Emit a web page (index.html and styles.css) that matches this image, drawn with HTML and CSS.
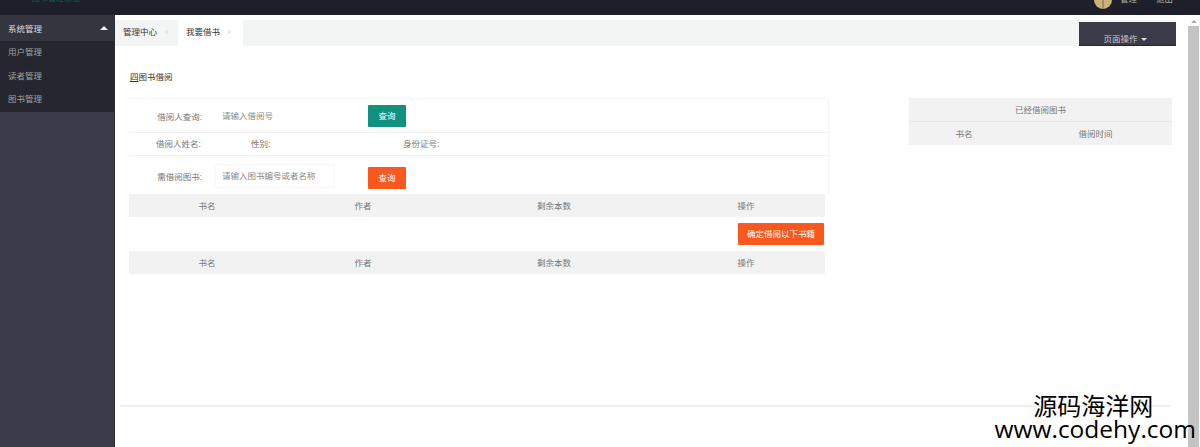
FILE: index.html
```html
<!DOCTYPE html>
<html lang="zh">
<head>
<meta charset="utf-8">
<title>图书借阅</title>
<link rel="stylesheet" href="styles.css">
</head>
<body>
<header class="topbar">
  <div class="logo-text">图书管理系统</div>
  <div class="user">
    <svg class="avatar" viewBox="0 0 20 9" width="20" height="9"><circle cx="10" cy="0" r="9" fill="#c9b27c"/><path d="M10 0V9" stroke="#7d6a3e" stroke-width="1"/></svg>
    <span class="user-name">管理</span>
    <span class="user-exit">退出</span>
  </div>
</header>
<div class="shell">
  <nav class="sidebar">
    <div class="nav-head"><span>系统管理</span><i class="caret-up"></i></div>
    <ul class="nav-list">
      <li>用户管理</li>
      <li>读者管理</li>
      <li>图书管理</li>
    </ul>
  </nav>
  <main class="content">
    <div class="tabbar">
      <div class="tab tab-grey">管理中心<span class="close">×</span></div>
      <div class="tab tab-active">我要借书<span class="close">×</span></div>
      <div class="page-ops">页面操作<i class="caret-down"></i></div>
    </div>
    <h1 class="title"><span class="title-icon">四</span>图书借阅</h1>
    <div class="columns">
      <section class="borrow">
        <div class="row row-query">
          <span class="label">借阅人查询:</span>
          <span class="input">请输入借阅号</span>
          <span class="btn btn-green">查询</span>
        </div>
        <div class="row row-info">
          <span class="info-a">借阅人姓名:</span>
          <span class="info-b">性别:</span>
          <span class="info-c">身份证号:</span>
        </div>
        <div class="row row-search">
          <span class="label">需借阅图书:</span>
          <span class="input">请输入图书编号或者名称</span>
          <span class="btn btn-orange">查询</span>
        </div>
        <div class="thead"><span>书名</span><span>作者</span><span>剩余本数</span><span>操作</span></div>
        <div class="confirm-row"><span class="btn btn-orange btn-wide">确定借阅以下书籍</span></div>
        <div class="thead"><span>书名</span><span>作者</span><span>剩余本数</span><span>操作</span></div>
      </section>
      <aside class="borrowed">
        <div class="borrowed-title">已经借阅图书</div>
        <div class="borrowed-head"><span>书名</span><span>借阅时间</span></div>
      </aside>
    </div>
    <div class="footer-line"></div>
  </main>
  <div class="scrollbar"><div class="scroll-arrow"></div><div class="scroll-thumb"></div></div>
</div>
<div class="watermark"><div class="wm-cn">源码海洋网</div><div class="wm-en">www.codehy.com</div></div>
</body>
</html>
```
FILE: styles.css
```css
* { box-sizing: border-box; }
html, body { margin: 0; height: 100%; overflow: hidden; }
body {
  font-family: "Liberation Sans", "Noto Sans CJK SC", sans-serif;
  font-size: 8.5px;
  color: #777;
  background: #fff;
  display: flex;
  flex-direction: column;
}
.topbar {
  height: 15px;
  flex: none;
  background: #1e1f2a;
  display: flex;
  justify-content: space-between;
  overflow: hidden;
}
.logo-text { margin: -6px 0 0 32px; color: #14604c; font-size: 8px; height: 10px; line-height: 10px; }
.user { display: flex; align-items: flex-start; margin-right: 27px; color: #aaa; }
.avatar { margin-right: 7px; }
.user-name { margin: -7px 19px 0 0; line-height: 12px; }
.user-exit { margin-top: -7px; line-height: 12px; }
.shell { flex: 1; display: flex; min-height: 0; }
.sidebar { width: 115px; flex: none; background: #3a3b4a; color: #c2c2c2; border-right: 1px solid #2e2f3a; }
.nav-head {
  height: 26px;
  background: #34353f;
  display: flex;
  align-items: center;
  justify-content: space-between;
  padding: 0 6px 0 8px;
  color: #dcdcdc;
}
.caret-up { width: 0; height: 0; border: 4px solid transparent; border-top: 0; border-bottom-color: #eee; }
.nav-list { list-style: none; margin: 0; padding: 0; background: #25262f; height: 71px; }
.nav-list li { height: 23.5px; line-height: 23.5px; padding-left: 8px; color: #a0a0a0; }
.content { flex: 1; min-width: 0; padding-top: 5px; display: flex; flex-direction: column; }
.tabbar {
  height: 26px;
  flex: none;
  margin-right: 12px;
  background: #f3f4f4;
  display: flex;
  color: #333;
}
.tab { height: 26px; line-height: 25px; width: 63px; padding-left: 8px; }
.tab-active { width: 65px; background: #fff; }
.close { color: #ddd; margin-left: 7px; }
.page-ops {
  margin-left: auto;
  margin-top: 2px;
  width: 97px;
  height: 24px;
  padding-right: 5px;
  background: #3a3a4b;
  border-bottom: 1px solid #26262f;
  color: #c8c8c8;
  display: flex;
  align-items: flex-end;
  justify-content: center;
  line-height: 12px;
}
.caret-down { width: 0; height: 0; border: 3.5px solid transparent; border-bottom: 0; border-top-color: #ddd; margin: 0 0 4px 3px; }
.title { margin: 25px 0 0 15px; height: 12px; line-height: 12px; font-size: 8.5px; font-weight: normal; color: #333; }
.title-icon { text-decoration: underline; }
.columns { display: flex; align-items: flex-start; margin-top: 15px; padding-left: 14px; }
.borrow { width: 700px; flex: none; }
.row { display: flex; align-items: center; border-bottom: 1px solid #f2f2f2; border-right: 1px solid #f5f5f5; }
.row-query { height: 35px; border-top: 1px solid #f7f7f7; }
.row-info { height: 23px; padding-bottom: 2px; }
.row-search { height: 38px; border-bottom: 0; padding-top: 5px; }
.label { width: 73px; text-align: right; flex: none; }
.input { width: 119px; margin-left: 13px; padding-left: 7px; height: 24px; line-height: 24px; flex: none; color: #888; }
.row-search .label { margin-bottom: 3px; }
.row-search .input { border: 1px solid #f8f8f8; padding-left: 6px; margin-bottom: 3px; line-height: 22px; }
.btn { display: inline-block; height: 22px; line-height: 22px; text-align: center; color: #fff; border-radius: 1px; }
.row .btn { width: 38px; margin-left: 34px; }
.btn-green { background: #11917f; }
.btn-orange { background: #f9581e; }
.btn-wide { width: 86px; }
.info-a { margin-left: 27px; width: 95px; }
.info-b { width: 152px; }
.thead {
  width: 696px;
  height: 23px;
  padding-bottom: 2px;
  background: #f2f2f2;
  display: grid;
  grid-template-columns: 156px 156px 226px 158px;
  align-items: center;
  justify-items: center;
}
.confirm-row { height: 34px; width: 696px; display: flex; justify-content: flex-end; align-items: center; padding-right: 1px; }
.borrowed { width: 263px; margin-left: 80px; background: #f2f2f2; flex: none; }
.borrowed-title { height: 24px; line-height: 25px; text-align: center; border-bottom: 1px solid #e8e8e8; }
.borrowed-head { height: 23px; padding-bottom: 2px; display: grid; grid-template-columns: 110px 153px; align-items: center; justify-items: center; }
.footer-line { height: 2px; margin: auto 17px 40px 5px; background: #f0f0f0; }
.scrollbar { width: 12px; flex: none; background: #fff; display: flex; flex-direction: column; }
.scroll-arrow { width: 0; height: 0; margin: 0 0 0 3px; border: 3px solid transparent; border-top: 5px solid #fff; border-bottom: 3px solid #aaa; box-sizing: content-box; }
.scroll-thumb { flex: 1; margin: 3px 1px 0 0; background: #c4c4c4; }
.watermark { position: absolute; right: 4px; bottom: 6px; text-align: center; color: #000; }
.wm-cn { font-size: 24px; line-height: 24px; padding-right: 4px; font-family: "Noto Sans CJK SC", sans-serif; }
.wm-en { font-size: 24.5px; line-height: 24px; font-family: "Open Sans", sans-serif; }
```
